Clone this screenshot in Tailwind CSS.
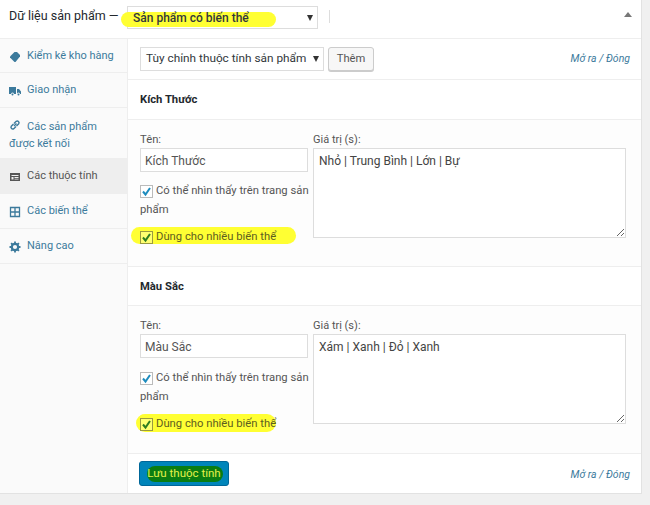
<!DOCTYPE html>
<html lang="vi">
  <head>
    <meta charset="UTF-8">
    <title>Dữ liệu sản phẩm</title>
    <script src="https://cdn.jsdelivr.net/npm/@tailwindcss/browser@4"></script>
  </head>
  <body class="w-[650px] h-[505px] overflow-hidden bg-[#f0f0f0] font-['Roboto',sans-serif] text-[12px] text-[#555]">
    <div class="w-[642px] h-[494px] bg-white border-r border-b border-[#e2e2e2] flex flex-col">

      <!-- header -->
      <div class="h-[39px] shrink-0 border-b border-[#eee] flex items-start pt-[6px] pl-[9px] relative">
        <span class="text-[12.5px] text-[#23282d] leading-[20px] w-[118px] whitespace-nowrap">Dữ liệu sản phẩm —</span>
        <div class="relative w-[191px] h-[23px] border border-[#ddd] flex items-center pl-[5px] text-[#32373c]">
          <span class="absolute left-[-7px] top-[5px] w-[155px] h-[15px] rounded-full bg-[#ffff33]"></span>
          <span class="relative font-medium mt-[1px]">Sản phẩm có biến thể</span>
          <span class="absolute right-[4px] top-[8px] w-0 h-0 border-x-[3px] border-x-transparent border-t-[6px] border-t-[#333]"></span>
        </div>
        <span class="ml-[11px] mt-[4px] w-[1px] h-[13px] bg-[#ddd]"></span>
        <span class="absolute left-[624px] top-[12px] w-0 h-0 border-x-[4px] border-x-transparent border-b-[5px] border-b-[#777]"></span>
      </div>

      <div class="flex flex-1">
        <!-- sidebar -->
        <div class="w-[128px] shrink-0 border-r border-[#eee] bg-[#fafafa] text-[11px] text-[#3c7a9c] flex flex-col">
          <a class="h-[34px] border-b border-[#eee] flex items-center gap-[6px] pl-[9px] pt-[2px]">
            <svg class="w-[12px] h-[12px]" viewBox="0 0 12 12"><path fill="#3c7a9c" d="M1 5.500 5.500 1H8l3 3v1.500L6.500 11H5.500L1 6.500z"/></svg>
            <span>Kiểm kê kho hàng</span>
          </a>
          <a class="h-[35px] border-b border-[#eee] flex items-center gap-[6px] pl-[9px] pt-[1px]">
            <svg class="w-[12px] h-[12px]" viewBox="0 0 12 12"><path fill="#3c7a9c" d="M0 2h7v7H5a1.500 1.500 0 0 0-3 0H0zM8 4h2l2 2.500V9h-1a1.500 1.500 0 0 0-3 0z"/><circle cx="3.500" cy="9.500" r="1" fill="#3c7a9c"/><circle cx="9.500" cy="9.500" r="1" fill="#3c7a9c"/></svg>
            <span>Giao nhận</span>
          </a>
          <a class="h-[51px] border-b border-[#eee] flex items-start gap-[6px] pl-[9px] pt-[10px] leading-[17px]">
            <svg class="w-[12px] h-[12px] mt-[1px] shrink-0" viewBox="0 0 12 12" fill="none" stroke="#3c7a9c" stroke-width="1.4"><path d="M5 7 7.500 4.500M4.500 5 2.300 7.200a1.800 1.800 0 0 0 2.500 2.500L7 7.500M5 4.500l2.200-2.200a1.800 1.800 0 0 1 2.500 2.500L7.500 7"/></svg>
            <span class="-ml-[18px] indent-[18px] w-[100px]">Các sản phẩm được kết nối</span>
          </a>
          <a class="h-[35px] border-b border-[#eee] bg-[#eeeeee] text-[#555] flex items-center gap-[6px] pl-[9px] pt-[1px]">
            <svg class="w-[12px] h-[12px]" viewBox="0 0 12 12"><path fill="#555" fill-rule="evenodd" d="M1 2h10v8H1zM2.500 4v1h7V4zM2.500 6v2.500h2V6zM5.500 6v1h4V6zM5.500 7.800v.8h4v-.8z"/></svg>
            <span>Các thuộc tính</span>
          </a>
          <a class="h-[35px] border-b border-[#eee] flex items-center gap-[6px] pl-[9px] pt-[1px]">
            <svg class="w-[12px] h-[12px]" viewBox="0 0 12 12" fill="none" stroke="#3c7a9c" stroke-width="1.3"><path d="M1.500 1.500h9v9h-9zM6 1.500v9M1.500 6h9"/></svg>
            <span>Các biến thể</span>
          </a>
          <a class="h-[35px] border-b border-[#eee] flex items-center gap-[6px] pl-[9px] pt-[1px]">
            <svg class="w-[12px] h-[12px]" viewBox="0 0 12 12"><circle cx="6" cy="6" r="3.200" fill="none" stroke="#3c7a9c" stroke-width="2.200"/><path stroke="#3c7a9c" stroke-width="1.800" d="M6 .5v2M6 9.500v2M.5 6h2M9.500 6h2M2.100 2.100l1.400 1.400M8.500 8.500l1.400 1.400M2.100 9.900l1.400-1.400M8.500 3.500l1.400-1.400"/></svg>
            <span>Nâng cao</span>
          </a>
        </div>

        <!-- attributes -->
        <div class="flex-1 flex flex-col">
          <div class="h-[41px] shrink-0 border-b border-[#eee] flex items-center pl-[12px] pr-[11px]">
            <div class="relative w-[184px] h-[24px] border border-[#ddd] flex items-center pl-[5px] text-[11.8px] text-[#32373c]">
              <span>Tùy chỉnh thuộc tính sản phẩm</span>
              <span class="absolute right-[4px] top-[8px] w-0 h-0 border-x-[3px] border-x-transparent border-t-[6px] border-t-[#333]"></span>
            </div>
            <button class="ml-[4px] w-[46px] h-[24px] rounded-[3px] border border-[#ccc] bg-[#f7f7f7] shadow-[0_1px_0_#ccc] text-[11.2px] text-[#555]">Thêm</button>
            <span class="ml-auto italic text-[10.5px] text-[#3c7a9c]">Mở ra / Đóng</span>
          </div>

          <div class="h-[40px] shrink-0 border-b border-[#eee] flex items-center pl-[12px] pt-[1px] text-[11.25px] font-bold text-[#23282d]">Kích Thước</div>
          <div class="h-[147px] shrink-0 border-b border-[#eee] bg-[#fdfdfd] pt-[11px] pl-[12px] flex gap-[5px] text-[11.25px]">
            <div class="w-[168px]">
              <div class="leading-[17px]">Tên:</div>
              <input class="w-[168px] h-[24px] border border-[#ddd] bg-white pl-[4px] pt-[1px] text-[12px] outline-none" value="Kích Thước">
              <div class="mt-[9px] leading-[19px] whitespace-nowrap">
                <span class="inline-flex align-[-3px] w-[13px] h-[13px] border border-[#bbb] bg-white mr-[3px] items-center justify-center"><svg class="w-[11px] h-[11px]" viewBox="0 0 11 11" fill="none" stroke="#1e8cbe" stroke-width="2"><path d="M2 5.500 4.500 8.500 9 2"/></svg></span>Có thể nhìn thấy trên trang sản<br>phẩm
              </div>
              <div class="relative mt-[9px] leading-[17px] whitespace-nowrap">
                <span class="absolute left-[-9px] top-[-1px] w-[165px] h-[17px] rounded-full bg-[#ffff33]"></span>
                <span class="relative inline-flex align-[-3px] w-[13px] h-[13px] border border-[#9a9a40] bg-white/30 mr-[3px] items-center justify-center"><svg class="w-[11px] h-[11px]" viewBox="0 0 11 11" fill="none" stroke="#2f7d1f" stroke-width="2"><path d="M2 5.500 4.500 8.500 9 2"/></svg></span><span class="relative text-[#5d5d20]">Dùng cho nhiều biến thể</span>
              </div>
            </div>
            <div class="w-[313px]">
              <div class="leading-[17px] text-[11px]">Giá trị (s):</div>
              <textarea class="block w-[313px] h-[90px] border border-[#ddd] bg-white px-[5px] py-[3px] text-[12px] outline-none text-[#444]">Nhỏ | Trung Bình | Lớn | Bự</textarea>
            </div>
          </div>

          <div class="h-[39px] shrink-0 border-b border-[#eee] flex items-center pl-[12px] pt-[2px] text-[11.25px] font-bold text-[#23282d]">Màu Sắc</div>
          <div class="h-[148px] shrink-0 border-b border-[#eee] bg-[#fdfdfd] pt-[11px] pl-[12px] flex gap-[5px] text-[11.25px]">
            <div class="w-[168px]">
              <div class="leading-[17px]">Tên:</div>
              <input class="w-[168px] h-[24px] border border-[#ddd] bg-white pl-[4px] pt-[1px] text-[12px] outline-none" value="Màu Sắc">
              <div class="mt-[10px] leading-[19px] whitespace-nowrap">
                <span class="inline-flex align-[-3px] w-[13px] h-[13px] border border-[#bbb] bg-white mr-[3px] items-center justify-center"><svg class="w-[11px] h-[11px]" viewBox="0 0 11 11" fill="none" stroke="#1e8cbe" stroke-width="2"><path d="M2 5.500 4.500 8.500 9 2"/></svg></span>Có thể nhìn thấy trên trang sản<br>phẩm
              </div>
              <div class="relative mt-[9px] leading-[17px] whitespace-nowrap">
                <span class="absolute left-[-4px] top-[-1px] w-[140px] h-[18px] rounded-full bg-[#ffff33]"></span>
                <span class="relative inline-flex align-[-3px] w-[13px] h-[13px] border border-[#9a9a40] bg-white/30 mr-[3px] items-center justify-center"><svg class="w-[11px] h-[11px]" viewBox="0 0 11 11" fill="none" stroke="#2f7d1f" stroke-width="2"><path d="M2 5.500 4.500 8.500 9 2"/></svg></span><span class="relative text-[#5d5d20]">Dùng cho nhiều biến thể</span>
              </div>
            </div>
            <div class="w-[313px]">
              <div class="leading-[17px] text-[11px]">Giá trị (s):</div>
              <textarea class="block w-[313px] h-[90px] border border-[#ddd] bg-white px-[5px] py-[3px] text-[12px] outline-none text-[#444]">Xám | Xanh | Đỏ | Xanh</textarea>
            </div>
          </div>

          <div class="flex-1 flex items-center pl-[11px] pr-[11px]">
            <button class="relative w-[90px] h-[25px] rounded-[3px] border border-[#006799] bg-[#0085ba] flex items-center justify-center pt-[1px] text-[11.5px]">
              <span class="absolute left-[7px] top-[4px] w-[76px] h-[16px] rounded-full bg-[#0a7d12]"></span>
              <span class="relative text-[#e4f04a]">Lưu thuộc tính</span>
            </button>
            <span class="ml-auto mt-[3px] italic text-[10.5px] text-[#3c7a9c]">Mở ra / Đóng</span>
          </div>
        </div>
      </div>
    </div>
  </body>
</html>
